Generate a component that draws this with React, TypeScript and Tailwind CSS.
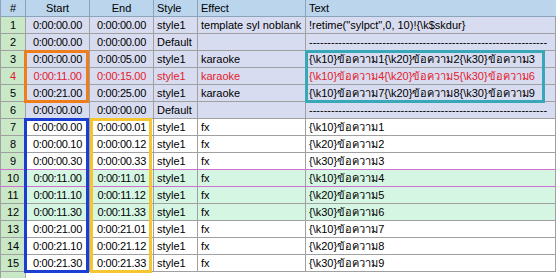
const TH = "ข้อความ";

type Row = {
  start: string;
  end: string;
  style: string;
  effect: string;
  text: string;
  kind: "comment" | "plain" | "mint";
  red?: boolean;
  dashes?: boolean;
};

const rows: Row[] = [
  { start: "0:00:00.00", end: "0:00:00.00", style: "style1", effect: "template syl noblank", text: '!retime("sylpct",0, 10)!{\\k$skdur}', kind: "comment" },
  { start: "0:00:00.00", end: "0:00:00.00", style: "Default", effect: "", text: "", kind: "comment", dashes: true },
  { start: "0:00:00.00", end: "0:00:05.00", style: "style1", effect: "karaoke", text: `{\\k10}${TH}1{\\k20}${TH}2{\\k30}${TH}3`, kind: "comment" },
  { start: "0:00:11.00", end: "0:00:15.00", style: "style1", effect: "karaoke", text: `{\\k10}${TH}4{\\k20}${TH}5{\\k30}${TH}6`, kind: "comment", red: true },
  { start: "0:00:21.00", end: "0:00:25.00", style: "style1", effect: "karaoke", text: `{\\k10}${TH}7{\\k20}${TH}8{\\k30}${TH}9`, kind: "comment" },
  { start: "0:00:00.00", end: "0:00:00.00", style: "Default", effect: "", text: "", kind: "comment", dashes: true },
  { start: "0:00:00.00", end: "0:00:00.01", style: "style1", effect: "fx", text: `{\\k10}${TH}1`, kind: "plain" },
  { start: "0:00:00.10", end: "0:00:00.12", style: "style1", effect: "fx", text: `{\\k20}${TH}2`, kind: "plain" },
  { start: "0:00:00.30", end: "0:00:00.33", style: "style1", effect: "fx", text: `{\\k30}${TH}3`, kind: "plain" },
  { start: "0:00:11.00", end: "0:00:11.01", style: "style1", effect: "fx", text: `{\\k10}${TH}4`, kind: "mint" },
  { start: "0:00:11.10", end: "0:00:11.12", style: "style1", effect: "fx", text: `{\\k20}${TH}5`, kind: "mint" },
  { start: "0:00:11.30", end: "0:00:11.33", style: "style1", effect: "fx", text: `{\\k30}${TH}6`, kind: "mint" },
  { start: "0:00:21.00", end: "0:00:21.01", style: "style1", effect: "fx", text: `{\\k10}${TH}7`, kind: "plain" },
  { start: "0:00:21.10", end: "0:00:21.12", style: "style1", effect: "fx", text: `{\\k20}${TH}8`, kind: "plain" },
  { start: "0:00:21.30", end: "0:00:21.33", style: "style1", effect: "fx", text: `{\\k30}${TH}9`, kind: "plain" },
];

const cols = "grid grid-cols-[26px_64px_64px_44px_108px_1fr]";
const cell = "h-[17px] border-r border-b border-[#a0a0a0] leading-[16px] whitespace-nowrap overflow-hidden";

function GridRow({ row, n }: { row: Row; n: number }) {
  const bg =
    row.kind === "comment" ? "bg-[#d8dcf0]" : row.kind === "mint" ? "bg-[#d6f6e4]" : "bg-white";
  const color = row.red ? "text-[#e3202c]" : "text-black";
  const active = n === 10;
  return (
    <div className={`${cols} ${color} ${active ? "relative" : ""}`}>
      <div className={`${cell} border-l bg-[#c8e8c8] text-center`}>{n}</div>
      <div className={`${cell} ${bg} text-center tracking-[-0.3px]`}>{row.start}</div>
      <div className={`${cell} ${bg} text-center tracking-[-0.3px]`}>{row.end}</div>
      <div className={`${cell} ${bg} pl-[3px]`}>{row.style}</div>
      <div className={`${cell} ${bg} pl-[3px]`}>{row.effect}</div>
      <div className={`${cell} ${bg} pl-[3px]`}>
        {row.dashes ? "-".repeat(65) : row.text}
      </div>
      {active && (
        <div className="pointer-events-none absolute left-0 right-0 top-[-1px] h-[18px] border-y border-[#d070d0]" />
      )}
    </div>
  );
}

export default function App() {
  return (
    <div className="relative h-[278px] w-[556px] overflow-hidden bg-white text-[11px] font-['Liberation_Sans','Noto_Sans','DejaVu_Sans',sans-serif]">
      <div className={`${cols} text-black`}>
        <div className="h-[17px] border-l border-r border-b border-[#8aa4bc] bg-[#bad5ec] text-center leading-[16px]">#</div>
        <div className="h-[17px] border-r border-b border-[#8aa4bc] bg-[#bad5ec] text-center leading-[16px]">Start</div>
        <div className="h-[17px] border-r border-b border-[#8aa4bc] bg-[#bad5ec] text-center leading-[16px]">End</div>
        <div className="h-[17px] border-r border-b border-[#8aa4bc] bg-[#bad5ec] pl-[3px] leading-[16px]">Style</div>
        <div className="h-[17px] border-r border-b border-[#8aa4bc] bg-[#bad5ec] pl-[3px] leading-[16px]">Effect</div>
        <div className="h-[17px] border-b border-[#8aa4bc] bg-[#bad5ec] pl-[3px] leading-[16px]">Text</div>
      </div>
      {rows.map((r, i) => (
        <GridRow key={i} row={r} n={i + 1} />
      ))}
      <div className={cols}>
        <div className="h-[10px] border-l border-r border-[#a0a0a0] bg-[#c8e8c8]" />
      </div>

      {/* highlight boxes */}
      <div className="pointer-events-none absolute left-[24px] top-[50px] h-[53px] w-[65px] border-[3px] border-[#f07d1c]" />
      <div className="pointer-events-none absolute left-[305px] top-[50px] h-[53px] w-[240px] border-[3px] border-[#38a8b8]" />
      <div className="pointer-events-none absolute left-[24px] top-[118px] h-[155px] w-[65px] border-[3px] border-[#1a3ed2]" />
      <div className="pointer-events-none absolute left-[90px] top-[118px] h-[155px] w-[62px] border-[3px] border-[#f6c630]" />
    </div>
  );
}
